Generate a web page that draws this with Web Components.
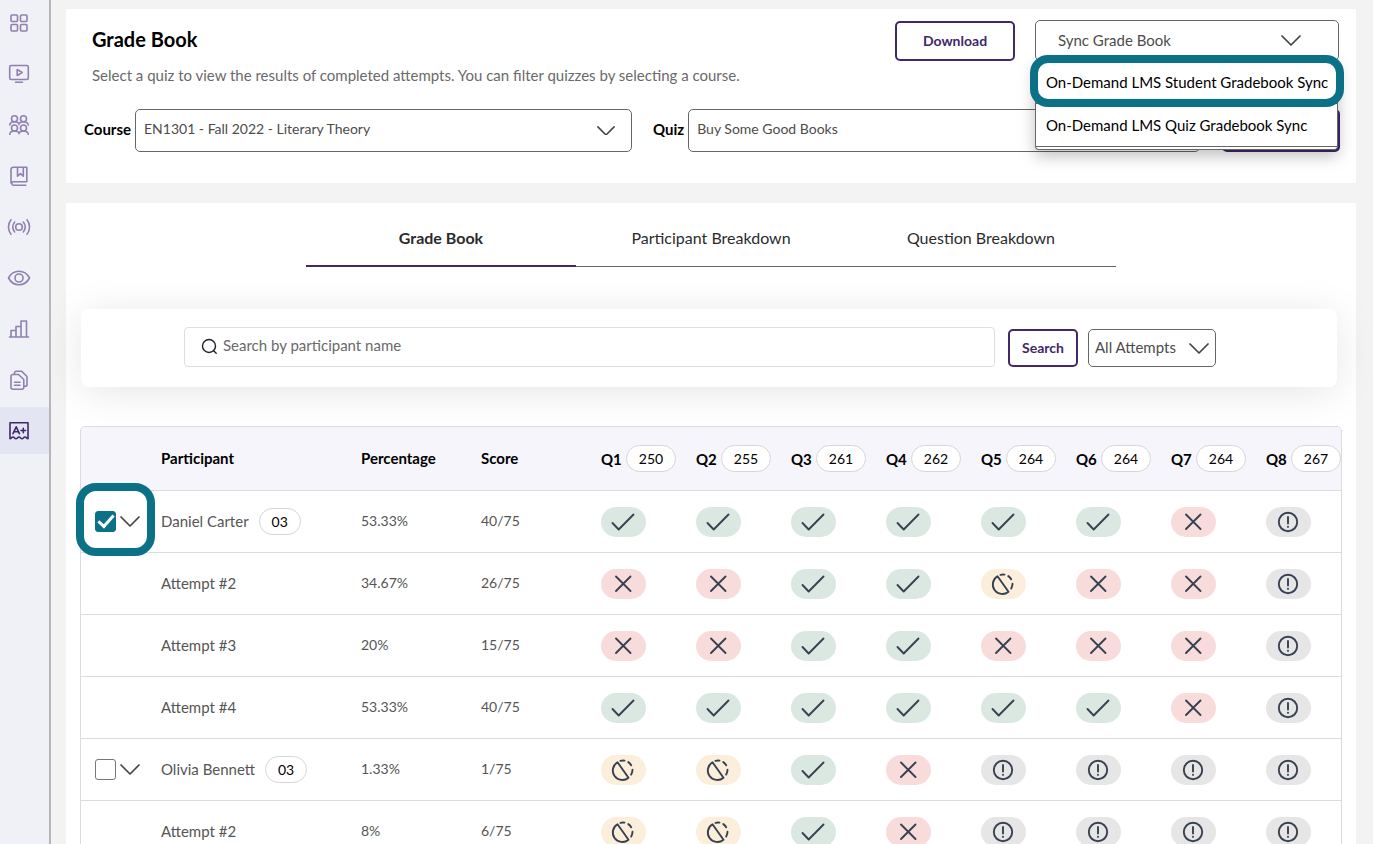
<!DOCTYPE html>
<html lang="en">
<head>
<meta charset="utf-8">
<meta name="viewport" content="width=device-width, initial-scale=1">
<title>Grade Book</title>
<style>
  html { --purple: #40286a; --teal: #0b7187; --line: #dcdcdc; --grey: #555; }
  body { margin: 0; font: 15px/20px Lato, "Open Sans", sans-serif; color: #000; background: #f3f3f3; }
</style>
</head>
<body>
<gb-app></gb-app>
<script>
const define = (name, render) => customElements.define(name, class extends HTMLElement {
  connectedCallback() {
    if (this.shadowRoot) return;
    this.attachShadow({ mode: "open" }).innerHTML = "<style>*{box-sizing:border-box}</style>" + render(this);
  }
});

const icons = {
  grid: '<rect x="2" y="2" width="6.5" height="6.5" rx="1"/><rect x="11.5" y="2" width="6.5" height="6.5" rx="1"/><rect x="2" y="11.5" width="6.5" height="6.5" rx="1"/><rect x="11.5" y="11.5" width="6.5" height="6.5" rx="1"/>',
  video: '<rect x=".7" y="1.5" width="18.6" height="14" rx="1.5"/><path d="M8.2 5.5v6l5-3zM6.5 18.3h7"/>',
  people: '<circle cx="5.5" cy="3.8" r="3"/><circle cx="14.5" cy="3.8" r="3"/><path d="M.7 10c.3-2 2-3.2 4.800-3.200S9.700 8 10 9.400c.3-1.400 1.700-2.600 4.500-2.600s4.500 1.200 4.800 3.200"/><circle cx="5.500" cy="13" r="3"/><circle cx="14.500" cy="13" r="3"/><path d="M.7 19.300c.3-2 2-3.300 4.800-3.300s4.200 1.200 4.500 2.600c.3-1.400 1.700-2.600 4.500-2.600s4.500 1.300 4.800 3.300"/>',
  book: '<path d="M17.800 15.700V1.200H4.500A2.500 2.500 0 0 0 2 3.700v13.200M17.800 15.700H4.200a1.800 1.800 0 0 0 0 3.500h12.600M8.500 1.200v9l2.900-2.600 2.900 2.600v-9"/>',
  live: '<circle cx="10" cy="10" r="3.300"/><path d="M5.700 5a7.500 7.500 0 0 0 0 10M14.300 5a7.500 7.500 0 0 1 0 10M2 2.800a11.500 11.500 0 0 0 0 14.400M18 2.800a11.500 11.500 0 0 1 0 14.400"/>',
  eye: '<path d="M-.5 10C2 5.300 5.700 3.200 10 3.200S18 5.300 20.500 10C18 14.700 14.300 16.800 10 16.800S2 14.700-.5 10z"/><circle cx="10" cy="10" r="4"/>',
  chart: '<path d="M.5 18h19M2 18v-6.500h5V18M7 11.500v-4h5V18M12 7.500V2h5.500v16"/>',
  docs: '<path d="M5.500 4.500V3a1.800 1.800 0 0 1 1.800-1.800h5.200L18 6.500v8a1.800 1.800 0 0 1-1.800 1.800h-1.400M2 6.300a1.800 1.800 0 0 1 1.800-1.800h5.700l5.300 5v7.900a1.800 1.800 0 0 1-1.800 1.800H3.800A1.800 1.800 0 0 1 2 17.400zM5.500 12.300h5.500M5.500 15.300h5.500"/>',
  grade: '<path d="M1 17.800V1.700h18v16.100c-1.300 0-1.500-1.800-3-1.800s-1.700 1.800-3 1.800-1.500-1.800-3-1.800-1.700 1.800-3 1.800S5.500 16 4 16s-1.700 1.800-3 1.800z"/><path d="M4 12.700 7.200 5.800l3.200 6.900M5 10.700h4.400M12 9.500h4.600M14.300 7.200v4.600"/>'
};

define("gb-icon", el => `<style>:host{display:block;width:20px;height:20px}svg{display:block;overflow:visible}</style>
  <svg width="20" height="20" viewBox="0 0 20 20" fill="none" stroke="currentColor" stroke-width="1.600" stroke-linejoin="round" stroke-linecap="round" aria-hidden="true">${icons[el.getAttribute("name")]}</svg>`);

define("gb-sidebar", () => `<style>
  :host{display:block;width:51px;flex:none;background:#f0f1f7;border-right:2px solid #b6b6ba}
  nav{display:flex;flex-direction:column;gap:4px;margin-top:-1px}
  a{display:flex;align-items:center;height:47px;padding-left:9px;color:#9080b0}
  a[aria-current]{background:#e4e5f2;color:var(--purple)}
  </style><nav aria-label="Main">${[["grid","Dashboard"],["video","Videos"],["people","Groups"],["book","Courses"],["live","Live"],["eye","Proctoring"],["chart","Reports"],["docs","Documents"],["grade","Grade book"]]
  .map(([i, t]) => `<a href="#${i}" aria-label="${t}"${i === "grade" ? ' aria-current="page"' : ""}><gb-icon name="${i}"></gb-icon></a>`).join("")}</nav>`);

define("gb-chevron", () => `<style>:host{display:block;width:var(--chevron,20px)}svg{display:block;width:100%}</style>
  <svg viewBox="0 0 20 11" fill="none" stroke="#444" stroke-width="1.700" stroke-linecap="round" stroke-linejoin="round" aria-hidden="true"><path d="M1 1l9 9 9-9"/></svg>`);

define("gb-select", el => `<style>
  :host{display:flex;align-items:center;gap:4px}
  label{font-weight:700;padding-bottom:4px}
  .box{display:grid;flex:1;align-items:center}
  select,gb-chevron{grid-area:1/1}
  select{appearance:none;width:100%;height:var(--h,43px);margin:0;border:1px solid #666;border-radius:5px;background:#fff;color:#4c4c4c;font:inherit;font-size:var(--size,14px);padding:0 30px var(--drop,4px) var(--pad,8px)}
  gb-chevron{justify-self:end;margin-right:var(--inset,17px);pointer-events:none}
  </style>${el.getAttribute("label") ? `<label for="s">${el.getAttribute("label")}</label>` : ""}
  <div class="box"><select id="s"${el.getAttribute("label") ? "" : ` aria-label="${el.getAttribute("name")}"`}><option>${el.getAttribute("value")}</option></select><gb-chevron></gb-chevron></div>`);

define("gb-button", () => `<style>:host{display:block}
  button{display:block;width:100%;height:100%;margin:0;padding:0;background:#fff;border:2px solid var(--purple);border-radius:5px;color:var(--purple);font:inherit;font-size:14px;font-weight:700;cursor:pointer}
  </style><button type="button"><slot></slot></button>`);

define("gb-header", () => `<style>
  :host{display:block;background:#fff;padding:11px 16px 31px 18px}
  .top{display:flex;align-items:flex-start;padding-left:8px}
  .text{flex:1}
  h1{margin:7px 0 0;font-size:20px;line-height:24px}
  p{margin:14px 0 0;color:#6a6a6a;line-height:20px}
  .top gb-button{width:120px;height:40px;margin:1px 20px 0 0}
  .sync{position:relative;width:304px;margin-right:1px}
  .sync gb-select{--h:41px;--pad:22px;--inset:38px;--size:15px;--drop:1px}
  .menu{position:absolute;z-index:2;left:0;top:41px;width:303px;padding:0 0 2px;background:#fff;border:1px solid #666;border-top:0;border-radius:0 0 4px 4px;box-shadow:0 6px 16px rgba(0,0,0,.25)}
  .menu button{display:block;width:100%;height:43px;margin:0;padding:0 0 0 10px;border:0;border-bottom:1px solid #666;background:#fff;font:inherit;text-align:left;white-space:nowrap}
  .ring{position:absolute;z-index:3;left:-5px;top:35px;width:314px;height:52px;border:8px solid var(--teal);border-radius:18px;pointer-events:none}
  .row{display:flex;align-items:center;margin-top:24px;--chevron:18px}
  .course{flex:548}.quiz{flex:547;margin-left:21px}
  .row button{width:118px;height:43px;margin:0 0 0 22px;border:0;border-radius:5px;background:var(--purple)}
  </style>
  <div class="top"><div class="text"><h1>Grade Book</h1><p>Select a quiz to view the results of completed attempts. You can filter quizzes by selecting a course.</p></div>
  <gb-button>Download</gb-button>
  <div class="sync"><gb-select name="Sync" value="Sync Grade Book"></gb-select>
    <div class="menu"><button type="button">On-Demand LMS Student Gradebook Sync</button><button type="button">On-Demand LMS Quiz Gradebook Sync</button></div>
    <div class="ring"></div></div></div>
  <div class="row"><gb-select class="course" label="Course" value="EN1301 - Fall 2022 - Literary Theory"></gb-select><gb-select class="quiz" label="Quiz" value="Buy Some Good Books"></gb-select><button type="button" aria-label="View"></button></div>`);

define("gb-tabs", () => `<style>
  :host{display:block;width:810px;max-width:100%;margin:0 auto}
  div{display:grid;grid-template-columns:repeat(3,1fr)}
  button{height:64px;margin:0;padding:7px 0 0;border:0;border-bottom:1px solid #666;background:none;font:inherit;font-size:16px;color:#2b2b2b}
  button[aria-selected=true]{font-weight:700;border-bottom:2px solid var(--purple);padding-top:8px}
  </style><div role="tablist"><button role="tab" aria-selected="true">Grade Book</button><button role="tab" aria-selected="false">Participant Breakdown</button><button role="tab" aria-selected="false">Question Breakdown</button></div>`);

define("gb-search", () => `<style>
  :host{display:flex;align-items:flex-end;padding:18px 121px 20px 103px;border-radius:8px;background:#fff;box-shadow:0 5px 40px rgba(0,0,0,.1)}
  .box{display:flex;align-items:center;flex:1;height:40px;margin-right:13px;padding:0 16px;border:1px solid #dedede;border-radius:4px}
  svg{margin-bottom:2px}
  input{flex:1;min-width:0;height:36px;margin:0;padding:0 0 4px 5px;border:0;background:none;font:inherit;outline:0}
  input::placeholder{color:#6a6a6a;opacity:1}
  gb-button{width:70px;height:38px;margin-right:10px}
  gb-select{width:128px;--h:38px;--pad:6px;--inset:7px;--size:15px;--drop:2px}
  </style><label class="box"><svg width="17" height="17" viewBox="0 0 17 17" fill="none" stroke="#222" stroke-width="1.400" stroke-linecap="round" aria-hidden="true"><circle cx="8" cy="8" r="6.500"/><path d="M12.700 12.700l2.500 2.500"/></svg><input type="text" aria-label="Search participants" placeholder="Search by participant name"></label>
  <gb-button>Search</gb-button><gb-select name="Attempts" value="All Attempts"></gb-select>`);

const marks = {
  ok: ["Correct", "#dbe8e1", '<path d="M-10.500 1l6.200 6.500L10.500-7.500"/>'],
  no: ["Incorrect", "#f8dcdc", '<path d="M-7-7.500l14.500 14.500M7.500-7.500L-7 7"/>'],
  part: ["Partial", "#fbeedb", '<path d="M-5.500-7.700A9.500 9.500 0 1 0 5.500 7.700zM1.500-9.400a9.500 9.500 0 0 0-4 .3M5.300-7.900A9.500 9.500 0 0 1 8.200-4.800M9.500-.2A9.500 9.500 0 0 1 8.200 4.600"/>'],
  none: ["Not graded", "#e6e6e6", '<circle r="9.200"/><path d="M0-5v6.500M0 4.600v.3"/>']
};
define("gb-mark", el => {
  const [label, color, path] = marks[el.getAttribute("kind")];
  return `<style>:host{display:block;width:45px;height:30px;border-radius:15px;background:${color}}svg{display:block}</style>
  <svg role="img" aria-label="${label}" width="45" height="30" viewBox="-22 -15 45 30" fill="none" stroke="#374151" stroke-width="1.900" stroke-linecap="round" stroke-linejoin="round">${path}</svg>`;
});

define("gb-pill", () => `<style>:host{display:inline-flex;align-items:center;height:27px;padding:0 12px;border:1px solid #d6d6d6;border-radius:14px;background:#fff;color:#000;font-size:14px;font-weight:400}</style><slot></slot>`);

const scores = [250, 255, 261, 262, 264, 264, 264, 267];
const rows = [
  ["Daniel Carter", "53.33%", "40/75", "ok ok ok ok ok ok no none", true],
  ["Attempt #2", "34.67%", "26/75", "no no ok ok part no no none"],
  ["Attempt #3", "20%", "15/75", "no no ok ok no no no none"],
  ["Attempt #4", "53.33%", "40/75", "ok ok ok ok ok ok no none"],
  ["Olivia Bennett", "1.33%", "1/75", "part part ok no none none none none", false],
  ["Attempt #2", "8%", "6/75", "part part ok no none none none none"]
];
define("gb-table", () => `<style>
  :host{display:block;position:relative}
  .clip{overflow:hidden;border:1px solid var(--line);border-radius:5px 5px 0 0;background:#fff}
  table{width:1280px;table-layout:fixed;border-collapse:separate;border-spacing:0;text-align:left}
  th,td{padding:0;border-bottom:1px solid var(--line);vertical-align:middle}
  th{height:64px;background:#f5f5fb;font-weight:700}
  td{height:62px;color:var(--grey)}
  .num{font-size:14px}
  .num,.name span,th[scope]{padding-bottom:2px}
  th.score{padding-bottom:0}
  .name,.q,.pick{display:flex;align-items:center}
  .name{gap:10px}.q{gap:4px}
  .pick{gap:4px;padding-left:14px}
  .pick button{display:block;margin:0;padding:0;border:0;background:none}
  input{appearance:none;display:grid;place-items:center;flex:none;width:21px;height:21px;margin:0;border:1px solid #777;border-radius:3px;background:#fff}
  input:checked{border-color:var(--teal);background:var(--teal)}
  input:checked::before{content:"";width:13px;height:6px;border:solid #fff;border-width:0 0 3px 3px;transform:rotate(-48deg);margin-bottom:4px}
  .ring{position:absolute;left:-4px;top:57px;width:79px;height:73px;border:8px solid var(--teal);border-radius:20px;pointer-events:none}
  </style>
  <div class="clip"><table><colgroup><col style="width:80px"><col style="width:200px"><col style="width:120px"><col style="width:120px">${'<col style="width:95px">'.repeat(8)}</colgroup>
  <thead><tr><th></th><th scope="col">Participant</th><th scope="col">Percentage</th><th scope="col">Score</th>${scores.map((s, i) => `<th scope="col" class="score"><div class="q"><span>Q${i + 1}</span><gb-pill>${s}</gb-pill></div></th>`).join("")}</tr></thead>
  <tbody>${rows.map(([n, p, s, m, c]) => `<tr><td>${c === undefined ? "" : `<div class="pick"><input type="checkbox" aria-label="Select ${n}"${c ? " checked" : ""}><button type="button" aria-label="Attempts of ${n}"><gb-chevron></gb-chevron></button></div>`}</td>
    <td><div class="name"><span>${n}</span>${c === undefined ? "" : "<gb-pill>03</gb-pill>"}</div></td><td class="num">${p}</td><td class="num">${s}</td>${m.split(" ").map(k => `<td><gb-mark kind="${k}"></gb-mark></td>`).join("")}</tr>`).join("")}</tbody></table></div>
  <div class="ring"></div>`);

define("gb-app", () => `<style>
  :host{display:flex;height:100vh}
  main{flex:1;min-width:0;overflow:hidden;padding:9px 17px 0 15px}
  section{margin-top:20px;padding:0 14px;background:#fff}
  gb-search{margin:42px 5px 39px 1px}
  </style><gb-sidebar></gb-sidebar><main><gb-header></gb-header><section><gb-tabs></gb-tabs><gb-search></gb-search><gb-table></gb-table></section></main>`);
</script>
</body>
</html>
